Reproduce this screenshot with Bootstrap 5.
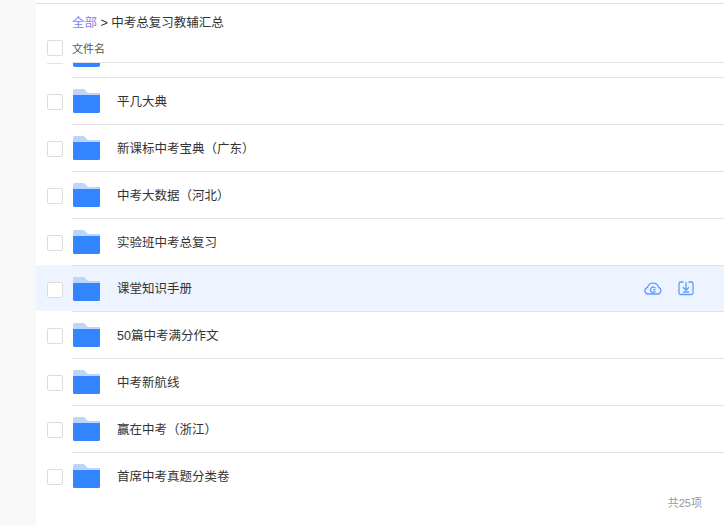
<!DOCTYPE html>
<html lang="zh-CN">
<head>
    <meta charset="UTF-8">
    <meta name="viewport" content="width=device-width, initial-scale=1.0">
    <title>中考总复习教辅汇总</title>
    <link href="https://cdn.jsdelivr.net/npm/bootstrap@5.3.0/dist/css/bootstrap.min.css" rel="stylesheet">
    <style>
        html, body { height: 525px; overflow: hidden; }
        body { background: #fff; font-family: "Liberation Sans", "Noto Sans CJK SC", sans-serif; font-size: 12.5px; color: #333; }
        .side-gutter { width: 36px; height: 525px; background: #f8f8f8; flex-shrink: 0; }
        .file-panel { flex-grow: 1; min-width: 0; padding-top: 3px; }
        .top-rule { border-top: 1px solid #e2e2e2; }
        .crumbs { height: 35px; padding: 11px 0 0 36px; line-height: 17px; }
        .crumbs a { color: #7c83f5; text-decoration: none; }
        .head-row { height: 23px; padding-top: 1px; }
        .head-name { font-size: 11px; margin-left: 9px; margin-top: 1px; color: #555; line-height: 16px; }
        .check-box { width: 16px; height: 16px; border: 1px solid #dcdcdc; border-radius: 2px; background: #fff; margin-left: 11px; flex-shrink: 0; }
        .cut-row { height: 15px; overflow: hidden; position: relative; }
        .cut-line { border-top: 1px solid #e2e2e2; margin-left: 36px; height: 15px; }
        .cut-folder { width: 27px; height: 4px; margin-left: 1px; background: #3385ff; border-radius: 0 0 2px 2px; }
        .cut-check { width: 16px; height: 1px; top: 1px; left: 11px; background: #e4e4e4; position: absolute; }
        .file-row { height: 47px; position: relative; }
        .file-inner { height: 100%; margin-left: 36px; border-top: 1px solid #e2e2e2; padding-right: 29px; }
        .file-row .check-box { position: absolute; top: 17px; margin-left: 11px; }
        .file-row.is-hover { height: 46px; background: #edf4ff; }
        .folder-icon { width: 28px; height: 24px; flex-shrink: 0; margin-left: 1px; }
        .file-name { margin-left: 16px; line-height: 18px; padding-top: 1px; }
        .is-hover .file-name { padding-top: 0; }
        .row-icon { width: 18px; height: 18px; margin-left: 15px; margin-top: -1px; }
        .total-text { font-size: 11px; color: #999; text-align: right; padding-right: 22px; line-height: 14px; margin-top: -3px; }
    </style>
</head>
<body>
    <div class="d-flex">
        <div class="side-gutter"></div>
        <div class="file-panel">
            <div class="top-rule"></div>
            <div class="crumbs"><a href="#">全部</a> &gt; 中考总复习教辅汇总</div>
            <div class="head-row d-flex align-items-start">
                <div class="check-box"></div>
                <div class="head-name">文件名</div>
            </div>
            <div class="cut-row">
                <div class="cut-check"></div>
                <div class="cut-line"><div class="cut-folder"></div></div>
            </div>
            <div id="fileList"></div>
            <div class="total-text">共25项</div>
        </div>
    </div>

    <script src="https://cdn.jsdelivr.net/npm/bootstrap@5.3.0/dist/js/bootstrap.bundle.min.js"></script>
    <script>
        const names = ['平几大典', '新课标中考宝典（广东）', '中考大数据（河北）', '实验班中考总复习', '课堂知识手册', '50篇中考满分作文', '中考新航线', '赢在中考（浙江）', '首席中考真题分类卷'];
        const folder = '<svg class="folder-icon" viewBox="0 0 28 24"><path d="M0 1.5Q0 0 1.5 0H11L15 4H27V7H0Z" fill="#bcd6fb"/><path d="M0 6H27V22.5Q27 24 25.5 24H1.5Q0 24 0 22.5Z" fill="#3385ff"/></svg>';
        const actions = '<svg class="row-icon" viewBox="0 0 18 18" fill="none" stroke="#5c9dff" stroke-width="1.3"><path d="M4.5 15H13.5A3.4 3.4 0 0 0 14.6 8.4 5.7 5.7 0 0 0 3.6 8.3 3.4 3.4 0 0 0 4.5 15Z"/><path d="M11.4 9.2A2.7 2.7 0 1 0 11.4 12.2M11.6 10.7H9.2"/></svg>'
            + '<svg class="row-icon" viewBox="0 0 18 18" fill="none" stroke="#5c9dff" stroke-width="1.3"><path d="M6.5 3H3.5Q2 3 2 4.5V14Q2 15.5 3.5 15.5H14.5Q16 15.5 16 14V4.5Q16 3 14.5 3H11.5"/><path d="M9 3V11M6 8.3L9 11.3L12 8.3M6 13H12"/></svg>';
        document.getElementById('fileList').innerHTML = names.map((n, i) =>
            '<div class="file-row' + (i === 4 ? ' is-hover' : '') + '"><div class="check-box"></div>'
            + '<div class="file-inner d-flex align-items-center">' + folder
            + '<div class="file-name flex-grow-1">' + n + '</div>' + (i === 4 ? actions : '') + '</div></div>'
        ).join('');
    </script>
</body>
</html>
